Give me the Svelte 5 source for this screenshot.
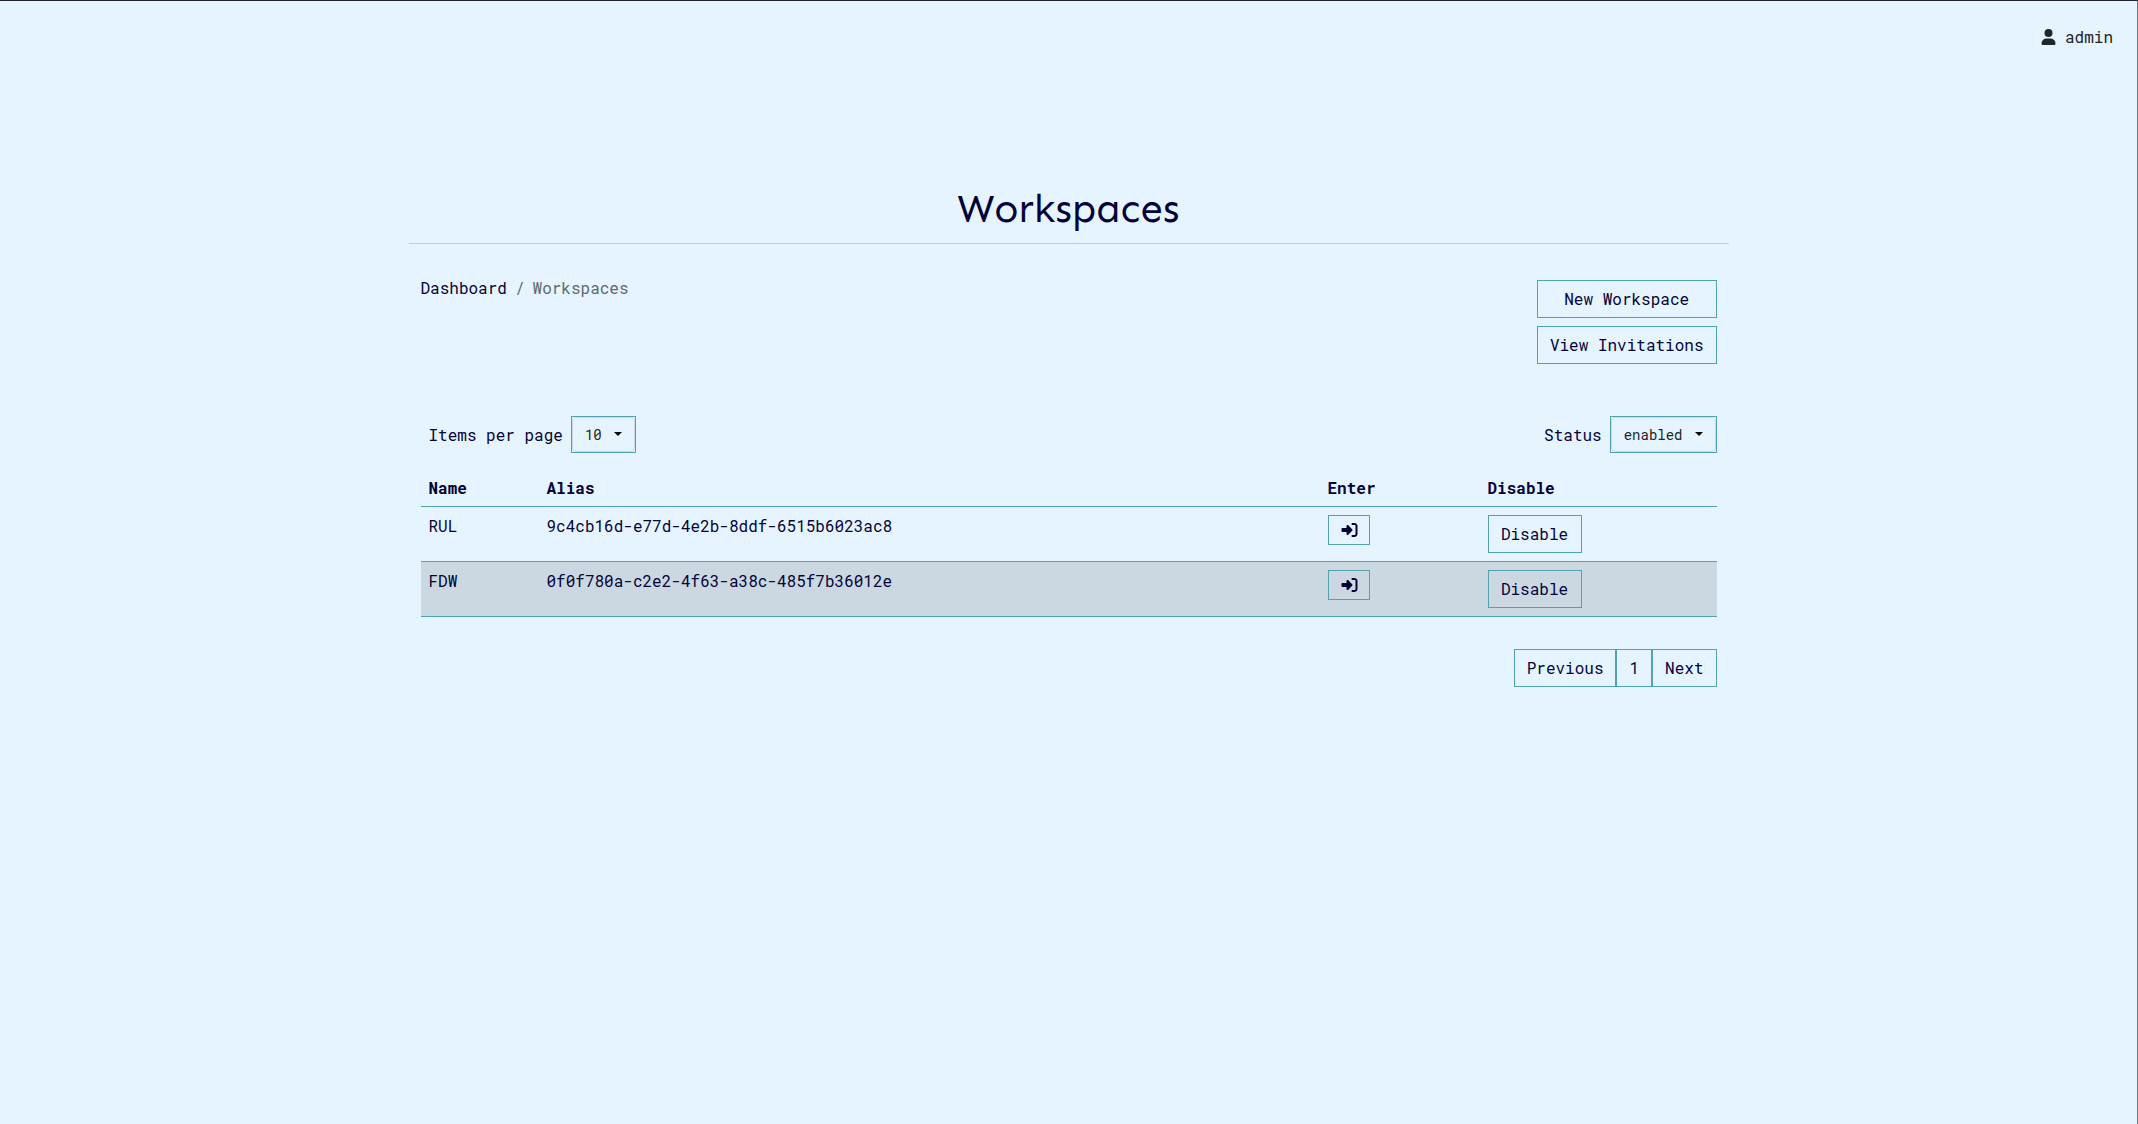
<script>
  const rows = [
    { name: 'RUL', alias: '9c4cb16d-e77d-4e2b-8ddf-6515b6023ac8' },
    { name: 'FDW', alias: '0f0f780a-c2e2-4f63-a38c-485f7b36012e' }
  ];
</script>

{#snippet select(value)}
  <button class="select"><span class="field">{value}<svg class="caret" viewBox="0 0 8 4"><path d="M0 0h8L4 4z" /></svg></span></button>
{/snippet}

<div class="page">
  <header>
    <svg class="user" viewBox="0 0 15 16"><circle cx="7.5" cy="4" r="4" /><path d="M5.500 9.500h4A5 5 0 0 1 14.500 14.500q0 1.500-1.500 1.500H2Q.5 16 .5 14.500A5 5 0 0 1 5.500 9.500z" /></svg>
    <span>admin</span>
  </header>
  <main>
    <h1>Workspaces</h1>
    <div class="content">
      <div class="top">
        <nav><span class="link">Dashboard</span><span>/</span><span>Workspaces</span></nav>
        <div class="actions">
          <button class="btn">New Workspace</button>
          <button class="btn">View Invitations</button>
        </div>
      </div>
      <div class="filters">
        <label>Items per page {@render select('10')}</label>
        <label>Status {@render select('enabled')}</label>
      </div>
      <div class="table">
        <div class="row head"><span>Name</span><span>Alias</span><span>Enter</span><span>Disable</span></div>
        {#each rows as row, i}
          <div class="row" class:active={i === 1}>
            <span class="text">{row.name}</span>
            <span class="text">{row.alias}</span>
            <span>
              <button class="btn enter" aria-label="Enter">
                <svg viewBox="0 0 512 512"><path d="M217.900 105.900L340.700 228.700c7.200 7.200 11.300 17.100 11.300 27.300s-4.100 20.100-11.300 27.300L217.900 406.100c-6.400 6.400-15 9.900-24 9.900c-18.700 0-33.900-15.200-33.900-33.900V320H32c-17.700 0-32-14.300-32-32v-64c0-17.700 14.300-32 32-32h128v-62.100c0-18.700 15.200-33.900 33.900-33.900c9 0 17.600 3.600 24 9.900zM352 416h64c17.700 0 32-14.300 32-32V128c0-17.700-14.300-32-32-32h-64c-17.700 0-32-14.300-32-32s14.300-32 32-32h64c53 0 96 43 96 96v256c0 53-43 96-96 96h-64c-17.700 0-32-14.300-32-32s14.300-32 32-32z" /></svg>
              </button>
            </span>
            <span><button class="btn disable">Disable</button></span>
          </div>
        {/each}
      </div>
      <div class="pager">
        <button class="btn">Previous</button><button class="btn">1</button><button class="btn">Next</button>
      </div>
    </div>
  </main>
</div>

<style>
  :global(body) { background: #e6f4ff; }
  * { box-sizing: border-box; }
  .page {
    height: 1124px;
    border-top: 1px solid #212529;
    border-right: 1px solid #6c7880;
    font: 16px/24px 'Roboto Mono', 'Liberation Mono', monospace;
    color: #03033a;
  }
  header {
    display: flex;
    justify-content: flex-end;
    align-items: center;
    gap: 9px;
    height: 72px;
    padding-right: 24px;
    color: #212529;
  }
  .user { width: 15px; height: 16px; fill: #212529; }
  main { width: 1320px; margin: 0 auto; }
  h1 {
    height: 171px;
    margin: 0;
    padding-top: 112px;
    border-bottom: 1px solid #c5cdd3;
    font: 400 40px/48px Sen, Lato, sans-serif;
    text-align: center;
  }
  .content { padding: 0 12px; }
  .top { display: flex; justify-content: space-between; height: 172px; padding-top: 32px; }
  nav { display: flex; gap: 8px; color: #5e6971; }
  .link { color: #03033a; }
  .actions { display: flex; flex-direction: column; gap: 8px; padding-top: 4px; }
  button { font: inherit; color: inherit; background: none; border-radius: 0; margin: 0; }
  .btn { height: 38px; padding: 0 12px; border: 1px solid #51a3ad; }
  .filters { display: flex; justify-content: space-between; height: 52px; padding-left: 8px; }
  .filters label { display: flex; align-items: center; gap: 8px; height: 37px; }
  .select { height: 37px; padding: 0; border: 1px solid #51a3ad; font-size: 14px; color: #212529; }
  .field { display: flex; align-items: center; height: 35px; padding: 0 12px; border: 1px solid #cbd6df; border-radius: 4px; }
  .caret { width: 8px; height: 4px; margin: 0 0 2px 12px; fill: #000; }
  .row {
    display: grid;
    grid-template-columns: 118px 781px 160px 1fr;
    height: 55px;
    border-bottom: 1px solid #51a3ad;
  }
  .row > span { padding: 8px 8px 0; }
  .row > .text { padding-top: 7px; }
  .head { height: 39px; font-weight: 700; }
  .active { background: #cbd8e1; }
  .row button { display: block; }
  .disable { width: 94px; }
  .enter { height: 30px; width: 42px; }
  .enter svg { display: block; width: 17px; height: 16px; fill: #03033a; }
  .pager { display: flex; justify-content: flex-end; padding-top: 32px; }
</style>
